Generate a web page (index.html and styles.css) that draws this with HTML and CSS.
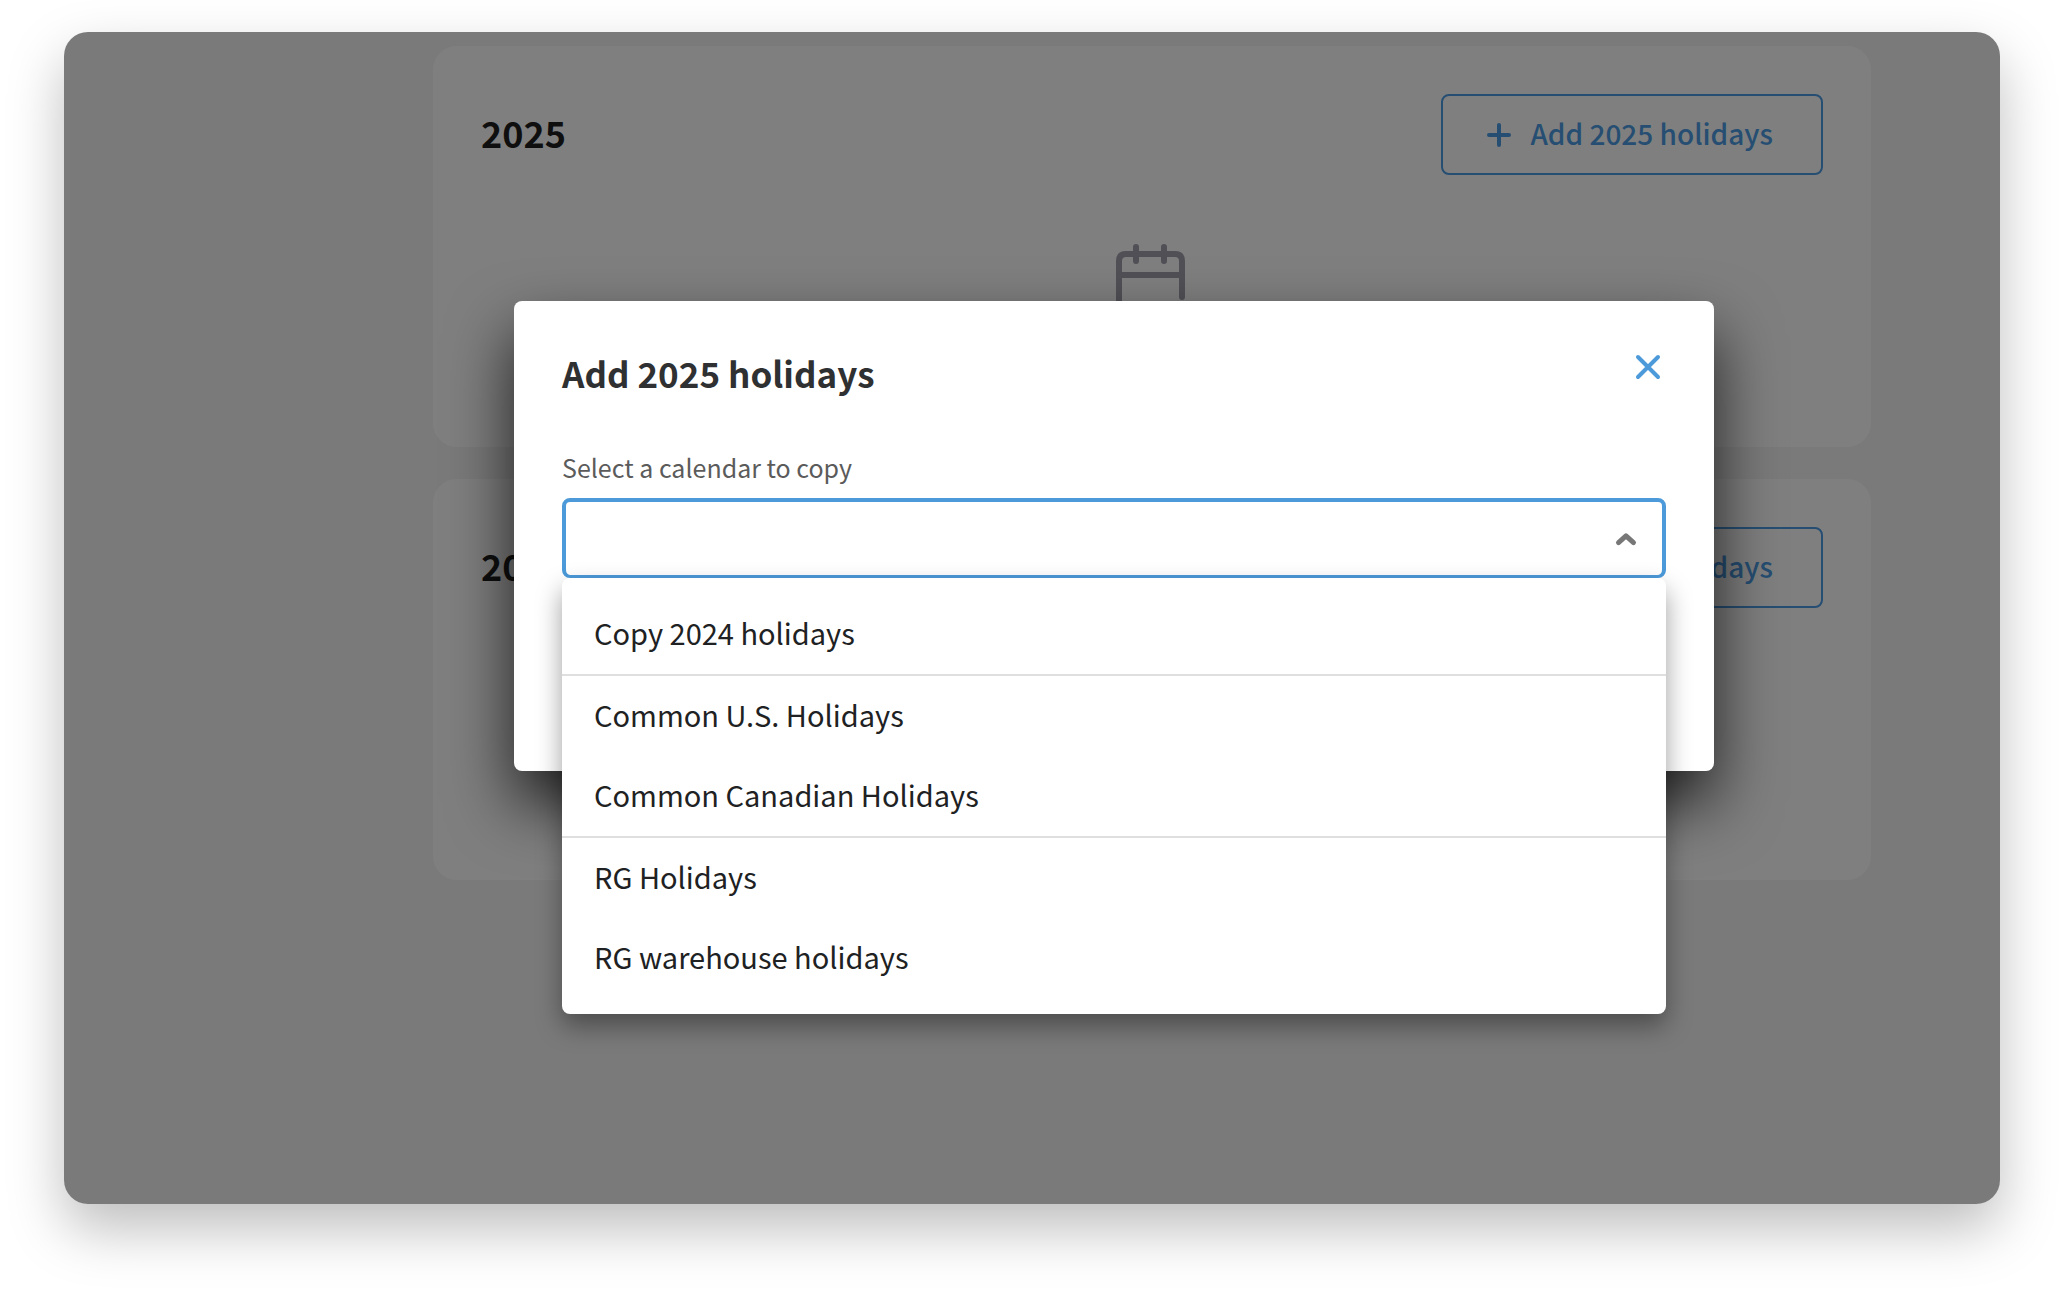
FILE: index.html
```html
<!DOCTYPE html>
<html lang="en">
<head>
  <meta charset="utf-8">
  <title>Holiday calendars</title>
  <link rel="stylesheet" href="styles.css">
</head>
<body>
  <div class="window">
    <main class="years">
      <section class="card">
        <header class="card-head">
          <h2 class="year">2025</h2>
          <button class="add" type="button">
            <svg class="add-icon" viewBox="0 0 24 24" aria-hidden="true"><path d="M12 2v20M2 12h20"/></svg>
            <span class="add-text">Add 2025 holidays</span>
          </button>
        </header>
        <svg class="calendar" viewBox="0 0 72 72" aria-hidden="true">
          <path d="M66 53V17q0-7-7-7H10q-7 0-7 7v42q0 7 7 7h36M3 31h63M20 3v14M48 3v14"/>
        </svg>
      </section>
      <section class="card">
        <header class="card-head">
          <h2 class="year">2026</h2>
          <button class="add" type="button">
            <svg class="add-icon" viewBox="0 0 24 24" aria-hidden="true"><path d="M12 2v20M2 12h20"/></svg>
            <span class="add-text">Add 2026 holidays</span>
          </button>
        </header>
        <svg class="calendar" viewBox="0 0 72 72" aria-hidden="true">
          <path d="M66 53V17q0-7-7-7H10q-7 0-7 7v42q0 7 7 7h36M3 31h63M20 3v14M48 3v14"/>
        </svg>
      </section>
    </main>

    <div class="overlay">
      <div class="dialog" role="dialog" aria-modal="true" aria-labelledby="dialog-title">
        <header class="dialog-head">
          <h1 class="dialog-title" id="dialog-title">Add 2025 holidays</h1>
          <button class="close" type="button" aria-label="Close">
            <svg viewBox="0 0 24 24" aria-hidden="true"><path d="M2 2l20 20M22 2L2 22"/></svg>
          </button>
        </header>
        <label class="label" for="calendar">Select a calendar to copy</label>
        <div class="picker">
          <select class="select" id="calendar"><option value=""></option></select>
          <svg class="chevron" viewBox="0 0 20 12" aria-hidden="true"><path d="M2.5 9.6L10 2.8l7.5 6.8"/></svg>
          <ul class="menu" role="listbox" aria-label="Calendars">
            <li class="option" role="option">Copy 2024 holidays</li>
            <li class="option divided" role="option">Common U.S. Holidays</li>
            <li class="option" role="option">Common Canadian Holidays</li>
            <li class="option divided" role="option">RG Holidays</li>
            <li class="option" role="option">RG warehouse holidays</li>
          </ul>
        </div>
      </div>
    </div>
  </div>
</body>
</html>
```

FILE: styles.css
```css
* { box-sizing: border-box; }

body {
  margin: 0;
  padding: 32px 64px 96px;
  background: #fff;
  color: #202122;
  font-family: "Noto Sans CJK SC", "Noto Sans", sans-serif;
  font-size: 29px;
  line-height: 40px;
}

h1, h2, ul { margin: 0; padding: 0; }
button, select { font: inherit; }

svg {
  flex: none;
  overflow: visible;
  fill: none;
  stroke: currentColor;
  stroke-linecap: round;
  stroke-linejoin: round;
}

.window {
  position: relative;
  min-height: calc(100vh - 128px);
  border-radius: 24px;
  background: #f5f5f5;
  box-shadow: 0 25px 56px rgba(0, 0, 0, .26);
}

.years {
  display: flex;
  flex-direction: column;
  gap: 32px;
  padding: 14px 129px 0 369px;
}

.card {
  display: flex;
  flex-direction: column;
  gap: 69px;
  min-height: 401px;
  padding: 48px;
  border-radius: 24px;
  background: #fff;
}

.card-head {
  display: flex;
  align-items: center;
  justify-content: space-between;
}

.year {
  padding-bottom: 6px;
  color: #1f1f1f;
  font-size: 36px;
  font-weight: 700;
}

.add {
  display: flex;
  align-items: center;
  gap: 19px;
  height: 81px;
  padding: 0 48px 0 44px;
  border: 2px solid #4c9ce4;
  border-radius: 8px;
  background: none;
  color: #4c9ce4;
  font-size: 28px;
  font-weight: 500;
}

.add-text { padding-bottom: 4px; }

.add-icon {
  width: 24px;
  height: 24px;
  stroke-width: 4;
}

.calendar {
  align-self: center;
  width: 72px;
  height: 72px;
  color: #a0a1ac;
  stroke-width: 6;
}

.overlay {
  position: absolute;
  inset: 0;
  display: flex;
  align-items: flex-start;
  justify-content: center;
  padding: 269px 0 0 164px;
  border-radius: 24px;
  background: rgba(0, 0, 0, .5);
}

.dialog {
  width: 1200px;
  padding: 48px 48px 193px;
  border-radius: 8px;
  background: #fff;
  box-shadow: 0 32px 64px rgba(0, 0, 0, .75);
}

.dialog-head {
  display: flex;
  justify-content: space-between;
  margin-bottom: 53px;
}

.dialog-title {
  color: #2f3031;
  font-size: 35px;
  font-weight: 700;
  line-height: 47px;
}

.close {
  display: flex;
  align-items: center;
  justify-content: center;
  width: 36px;
  height: 36px;
  padding: 0;
  border: 0;
  background: none;
  color: #4c9ada;
}

.close svg {
  width: 24px;
  height: 24px;
  stroke-width: 4;
}

.label {
  display: block;
  margin-bottom: 13px;
  color: #5b5b5b;
  font-size: 25px;
  line-height: 36px;
}

.picker { position: relative; }

.select {
  display: block;
  width: 100%;
  height: 80px;
  padding: 0 64px 0 24px;
  appearance: none;
  border: 4px solid #4c9ada;
  border-bottom-width: 3px;
  border-radius: 8px;
  outline: 0;
  background: #fff;
}

.chevron {
  position: absolute;
  top: 35px;
  right: 30px;
  width: 20px;
  height: 12px;
  color: #777;
  stroke-width: 5;
}

.menu {
  position: absolute;
  top: 100%;
  left: 0;
  right: 0;
  padding: 16px 0;
  border-radius: 8px;
  background: #fff;
  box-shadow: 0 12px 26px rgba(0, 0, 0, .38);
  list-style: none;
}

.option { padding: 18px 32px 22px; }
.divided { border-top: 2px solid #dfdfdf; }
```
